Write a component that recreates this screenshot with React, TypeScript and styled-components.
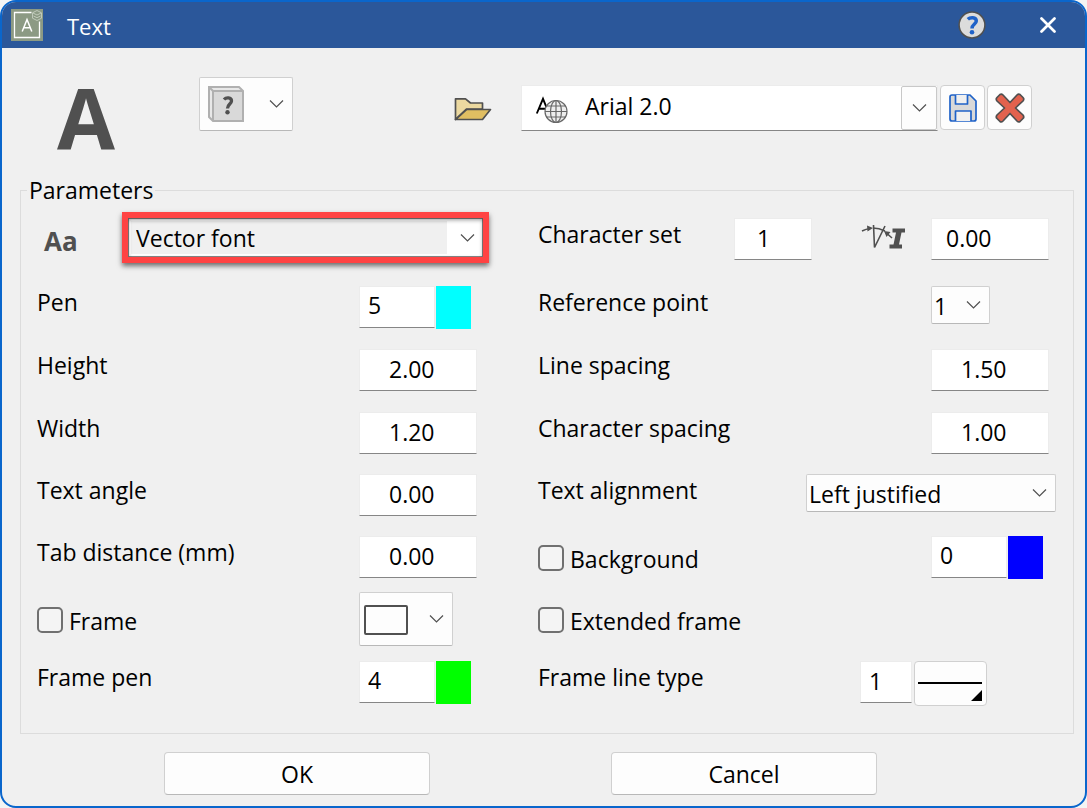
import React from "react";
import styled, { createGlobalStyle } from "styled-components";

const GlobalStyle = createGlobalStyle`
  *, *::before, *::after { box-sizing: border-box; }
  body { margin: 0; background: #f4f4f4; }
  body, button, input, select {
    font-family: "Open Sans", "Noto Sans", sans-serif;
    font-size: 23px;
    color: #000;
  }
`;

const Dialog = styled.main`
  display: flex;
  flex-direction: column;
  min-height: 100vh;
  border: 2px solid #0a66cc;
  border-radius: 16px;
  background: #f0f0f0;
  overflow: hidden;
`;

const TitleBar = styled.header`
  display: flex;
  align-items: center;
  height: 46px;
  padding: 0 23px 0 9px;
  background: #2b579a;
`;

const Title = styled.h1`
  flex: 1;
  margin: 2px 0 0 24px;
  font-size: 22px;
  font-weight: 400;
  line-height: 34px;
  color: #fff;
`;

const TitleButton = styled.button`
  display: grid;
  place-items: center;
  width: 28px;
  height: 28px;
  margin: 0 0 0 48px;
  padding: 0;
  border: 0;
  background: none;
`;

const Header = styled.section`
  display: grid;
  grid-template-columns: 142px 255px 67px minmax(0, 1fr) 94px;
  align-items: start;
  height: 125px;
  padding: 29px 53px 0 55px;
`;

const BigLetter = styled.div`
  height: 84px;
  font-size: 84px;
  font-weight: 700;
  line-height: 80px;
  color: #505050;
`;

const PickButton = styled.button`
  display: flex;
  align-items: center;
  justify-content: space-between;
  width: 94px;
  height: 54px;
  padding: 0 8px 0 4px;
  border: 1px solid #d0d0d0;
  border-bottom-color: #b8b8b8;
  border-radius: 2px;
  background: #fdfdfd;
`;

const FolderButton = styled.button`
  height: 26px;
  margin-top: 19px;
  padding: 0;
  border: 0;
  background: none;
  text-align: left;
`;

const FontField = styled.div`
  display: flex;
  align-items: stretch;
  height: 46px;
  margin: 8px 0 0;
  padding-left: 13px;
  border: 1px solid #ececec;
  border-bottom: 1px solid #868686;
  background: #fff;
`;

const FontInput = styled.input`
  flex: 1;
  min-width: 0;
  padding: 0 0 5px 16px;
  border: 0;
  background: none;
  outline: 0;
`;

const FontDrop = styled.button`
  display: grid;
  place-items: center;
  width: 36px;
  padding: 0;
  border: 1px solid #c8c8c8;
  border-radius: 2px;
  background: #fdfdfd;
`;

const Tools = styled.div`
  display: flex;
  gap: 2px;
  margin-top: 8px;
  padding-left: 2px;
`;

const ToolButton = styled.button`
  display: grid;
  place-items: center;
  flex: 0 0 45px;
  height: 45px;
  padding: 0;
  border: 1px solid #d0d0d0;
  border-radius: 4px;
  background: #fdfdfd;
`;

const Group = styled.fieldset`
  min-width: 0;
  margin: 0 11px 0 18px;
  padding: 11px 17px 10px 16px;
  border: 1px solid #dcdcdc;
`;

const Legend = styled.legend`
  margin-left: -10px;
  padding: 0 2px;
  line-height: 34px;
`;

const Rows = styled.div`
  display: grid;
  grid-template-columns: minmax(0, 322fr) minmax(0, 179fr) minmax(0, 393fr) minmax(0, 125fr);
  grid-template-rows: 68px 63px 63px 62px 62px 62px 63px 62px;
  align-items: start;
`;

const Label = styled.label`
  line-height: 32px;
`;

const Cell = styled.div<{ $wide?: boolean; $right?: number }>`
  display: flex;
  align-items: flex-start;
  grid-column: ${(p) => (p.$wide ? "span 2" : "auto")};
  padding-right: ${(p) => p.$right ?? 0}px;
`;

const Lead = styled(Label)`
  flex: 1;
`;

const Field = styled.input<{ $w: number; $pad: number; $lift?: boolean }>`
  width: ${(p) => p.$w}px;
  height: 42px;
  padding: 0 0 ${(p) => (p.$lift ? 4 : 2)}px ${(p) => p.$pad}px;
  border: 1px solid #ececec;
  border-bottom: 1px solid #868686;
  border-radius: 0;
  background: #fff;
  outline: 0;
`;

const Swatch = styled.button<{ $color: string }>`
  width: 35px;
  height: 43px;
  margin-left: 1px;
  padding: 0;
  border: 0;
  background: ${(p) => p.$color};
`;

const SelectWrap = styled.div<{ $w: number }>`
  display: grid;
  align-items: center;
  width: ${(p) => p.$w}px;
  height: 38px;
  border: 1px solid #d0d0d0;
  border-bottom-color: #b8b8b8;
  border-radius: 2px;
  background: #fdfdfd;

  > * {
    grid-area: 1 / 1;
  }
  > svg {
    justify-self: end;
    margin-right: 8px;
    pointer-events: none;
  }
`;

const Select = styled.select`
  width: 100%;
  height: 36px;
  padding: 1px 0 0 2px;
  border: 0;
  background: none;
  appearance: none;
  outline: 0;
`;

const FontTypeIcon = styled.span`
  width: 85px;
  padding-left: 7px;
  font-size: 26px;
  font-weight: 700;
  line-height: 46px;
  color: #505050;
`;

const Highlight = styled(SelectWrap)`
  flex: 1;
  width: auto;
  height: 51px;
  margin: -6px 49px 0 0;
  border: 6px solid #ff4343;
  border-radius: 0;
  background: linear-gradient(to left, #fff 36px, #f0f0f0 36px);
  box-shadow: 0 3px 5px rgba(0, 0, 0, 0.55), inset 0 2px 4px rgba(0, 0, 0, 0.4),
    inset 0 0 0 1px #888, inset 0 0 0 3px #fff;

  > select {
    padding: 0 0 0 8px;
  }
`;

const TickLabel = styled.label`
  display: flex;
  align-items: flex-start;
  gap: 6px;
  margin-top: 6px;
  line-height: 34px;
`;

const Tick = styled.input`
  appearance: none;
  width: 26px;
  height: 26px;
  margin: 3px 0 0;
  border: 2px solid #707070;
  border-radius: 5px;
  background: #f4f4f4;
`;

const FramePick = styled(PickButton)`
  margin-top: -6px;
`;

const SlantIconBox = styled.span`
  margin: 7px 26px 0 49px;
  height: 32px;
`;

const LineButton = styled(ToolButton)`
  flex: 0 0 73px;
  margin-left: 2px;
`;

const Footer = styled.footer`
  display: flex;
  justify-content: center;
  gap: 181px;
  padding: 18px 46px 11px 0;
`;

const ActionButton = styled.button`
  flex: 0 1 266px;
  height: 43px;
  padding: 0;
  border: 1px solid #d0d0d0;
  border-bottom-color: #b8b8b8;
  border-radius: 4px;
  background: #fdfdfd;
`;

const Chevron = () => (
  <svg width="15" height="10" viewBox="0 0 15 10" fill="none" stroke="#505050" strokeWidth="1.2" aria-hidden="true">
    <path d="M1 1.5 7.5 8 14 1.5" />
  </svg>
);

const AppIcon = () => (
  <svg width="32" height="32" viewBox="0 0 32 32" fill="none" aria-hidden="true">
    <path d="M0 0H32V32H0Z" fill="#8c9a84" />
    <path d="M20.500 3.500H3.500V28.500H28.500V12.500" stroke="#fff" strokeWidth="1.300" />
    <path d="M11.200 22.500 16 10.500 20.800 22.500M12.800 18.700H19.200" stroke="#fff" strokeWidth="1.500" />
    <path d="M26 1.500 30.500 3.800V9.200L26 11.500 21.500 9.200V3.800ZM22 4 26 6 30 4M22.500 7 26 8.700 29.500 7" stroke="#cdd5c8" strokeWidth=".8" />
  </svg>
);

const HelpIcon = () => (
  <svg width="28" height="28" viewBox="0 0 28 28" fill="none" aria-hidden="true">
    <circle cx="14" cy="14" r="12.900" fill="#dcdcdc" stroke="#505050" strokeWidth="1.500" />
    <path d="M9.800 8.300C12 6.300 18.300 5.800 18.300 10 18.300 13 14 13.200 14 17.500" stroke="#1f62c8" strokeWidth="3.500" />
    <circle cx="14" cy="21.300" r="2.300" fill="#1f62c8" />
  </svg>
);

const CloseIcon = () => (
  <svg width="16" height="16" viewBox="0 0 16 16" fill="none" stroke="#fff" strokeWidth="2.700" strokeLinecap="round" aria-hidden="true">
    <path d="M1.500 1.500 14.500 14.500M14.500 1.500 1.500 14.500" />
  </svg>
);

const BlockIcon = () => (
  <svg width="44" height="38" viewBox="0 0 44 38" fill="none" aria-hidden="true">
    <path d="M5 2H35L39 6V36H9L5 32Z" fill="#e8e8e8" />
    <path d="M9 6H39V36H9Z" fill="#d9d9d9" />
    <path d="M5 2H35L39 6V36H9L5 32ZM5 2 9 6V36M9 6H39" stroke="#b0b0b0" strokeWidth="2" />
    <path d="M20 14.500C22 12.300 27.500 12 27.500 16 27.500 19 23.500 19.300 23.500 23.500" stroke="#505050" strokeWidth="3.300" />
    <circle cx="23.500" cy="27.200" r="2.200" fill="#505050" />
  </svg>
);

const FolderIcon = () => (
  <svg width="38" height="24" viewBox="0 0 38 24" fill="none" stroke="#505050" strokeWidth="1.700" strokeLinejoin="round" aria-hidden="true">
    <path d="M1.500 22.500V1.800H11.500L16.500 6H28.500V12H12.500Z" fill="#ecd9a0" />
    <path d="M1.500 22.500 12.500 12.500H36.500L28.500 22.500Z" fill="#e0be62" />
  </svg>
);

const GlobeLetterIcon = () => (
  <svg width="34" height="44" viewBox="0 0 34 44" fill="none" aria-hidden="true">
    <path d="M1.800 27.500 8 12.800 14 27.500M4 22.800H12" stroke="#000" strokeWidth="1.900" />
    <circle cx="21" cy="25.500" r="11" fill="#eee" />
    <g stroke="#686868" strokeWidth="1.200">
      <circle cx="21" cy="25.500" r="11" />
      <ellipse cx="21" cy="25.500" rx="5.500" ry="11" />
      <path d="M21 14.500V36.500M10 25.500H32M11.700 20H30.300M11.700 31H30.300" />
    </g>
  </svg>
);

const SaveIcon = () => (
  <svg width="28" height="28" viewBox="0 0 28 28" fill="none" stroke="#1f62c8" strokeWidth="1.700" strokeLinejoin="round" aria-hidden="true">
    <path d="M3 1H21L27 7V25Q27 27 25 27H3Q1 27 1 25V3Q1 1 3 1Z" fill="#d9d9d9" />
    <path d="M6.500 1V10H18.500V1M6.500 27V17H22V27" fill="#f0f0f0" />
  </svg>
);

const DeleteIcon = () => (
  <svg width="30" height="30" viewBox="0 0 30 30" fill="#e2624e" stroke="#505050" strokeWidth="1.700" strokeLinejoin="round" aria-hidden="true">
    <path d="M5 1.500Q6.500 .5 8 2L15 9.500 22 2Q23.500 .5 25 1.500L28 4.500Q29.500 6 28 8L20.500 15 28 22Q29.500 24 28 25.500L25 28.500Q23.500 29.500 22 28L15 20.500 8 28Q6.500 29.500 5 28.500L2 25.500Q.5 24 2 22L9.500 15 2 8Q.5 6 2 4.500Z" />
  </svg>
);

const SlantIcon = () => (
  <svg width="44" height="28" viewBox="0 0 44 28" fill="none" stroke="#505050" strokeWidth="1.600" aria-hidden="true">
    <path d="M1 6Q5 4 9 3.500M12 3Q18 3 24 6" />
    <path d="M12.500 0 13.500 22.500 24 1M31 13 26 8.500" />
    <path d="M6 .5 12 3 6.500 6.500ZM23 6 29.500 7 25.500 12Z" fill="#505050" stroke="none" />
    <path d="M31.500 3.500H44V7.500H40.500L38 19.500H41V23.500H28.500V19.500H32.500L35 7.500H31.500Z" fill="#505050" stroke="none" />
  </svg>
);

const FrameIcon = () => (
  <svg width="46" height="32" viewBox="0 0 46 32" fill="none" aria-hidden="true">
    <rect x="1" y="3" width="42" height="28" rx="1" stroke="#505050" strokeWidth="2" />
  </svg>
);

const LineTypeIcon = () => (
  <svg width="66" height="40" viewBox="0 0 66 40" aria-hidden="true">
    <path d="M0 18H64V20H0ZM64 26V37H53Z" fill="#000" />
  </svg>
);

export default function App() {
  return (
    <>
      <GlobalStyle />
      <Dialog aria-label="Text">
        <TitleBar>
          <AppIcon />
          <Title>Text</Title>
          <TitleButton aria-label="Help"><HelpIcon /></TitleButton>
          <TitleButton aria-label="Close"><CloseIcon /></TitleButton>
        </TitleBar>

        <Header>
          <BigLetter>A</BigLetter>
          <PickButton aria-label="Text style"><BlockIcon /><Chevron /></PickButton>
          <FolderButton aria-label="Open"><FolderIcon /></FolderButton>
          <FontField>
            <GlobeLetterIcon />
            <FontInput aria-label="Font" defaultValue="Arial 2.0" />
            <FontDrop aria-label="Choose font"><Chevron /></FontDrop>
          </FontField>
          <Tools>
            <ToolButton aria-label="Save"><SaveIcon /></ToolButton>
            <ToolButton aria-label="Delete"><DeleteIcon /></ToolButton>
          </Tools>
        </Header>

        <Group>
          <Legend>Parameters</Legend>
          <Rows>
            <Cell $wide>
              <FontTypeIcon aria-hidden="true">Aa</FontTypeIcon>
              <Highlight $w={367}>
                <Select aria-label="Font type"><option>Vector font</option></Select>
                <Chevron />
              </Highlight>
            </Cell>
            <Cell>
              <Lead htmlFor="charset">Character set</Lead>
              <Field id="charset" $w={78} $pad={22} defaultValue="1" />
              <SlantIconBox><SlantIcon /></SlantIconBox>
            </Cell>
            <Cell><Field aria-label="Slant angle" $w={118} $pad={14} defaultValue="0.00" /></Cell>

            <Label htmlFor="pen">Pen</Label>
            <Cell>
              <Field id="pen" $w={76} $pad={8} $lift defaultValue="5" />
              <Swatch aria-label="Pen colour" $color="#00ffff" />
            </Cell>
            <Label htmlFor="refpoint">Reference point</Label>
            <SelectWrap $w={59}>
              <Select id="refpoint"><option>1</option></Select>
              <Chevron />
            </SelectWrap>

            <Label htmlFor="height">Height</Label>
            <Cell><Field id="height" $w={118} $pad={29} defaultValue="2.00" /></Cell>
            <Label htmlFor="linespacing">Line spacing</Label>
            <Cell><Field id="linespacing" $w={118} $pad={29} defaultValue="1.50" /></Cell>

            <Label htmlFor="width">Width</Label>
            <Cell><Field id="width" $w={118} $pad={29} defaultValue="1.20" /></Cell>
            <Label htmlFor="charspacing">Character spacing</Label>
            <Cell><Field id="charspacing" $w={118} $pad={29} defaultValue="1.00" /></Cell>

            <Label htmlFor="angle">Text angle</Label>
            <Cell><Field id="angle" $w={118} $pad={29} defaultValue="0.00" /></Cell>
            <Cell $wide>
              <Lead htmlFor="alignment">Text alignment</Lead>
              <SelectWrap $w={250}>
                <Select id="alignment"><option>Left justified</option></Select>
                <Chevron />
              </SelectWrap>
            </Cell>

            <Label htmlFor="tab">Tab distance (mm)</Label>
            <Cell><Field id="tab" $w={118} $pad={29} defaultValue="0.00" /></Cell>
            <TickLabel><Tick type="checkbox" />Background</TickLabel>
            <Cell>
              <Field aria-label="Background pen" $w={76} $pad={8} $lift defaultValue="0" />
              <Swatch aria-label="Background colour" $color="#0000ff" />
            </Cell>

            <TickLabel><Tick type="checkbox" />Frame</TickLabel>
            <FramePick aria-label="Frame shape"><FrameIcon /><Chevron /></FramePick>
            <Cell $wide>
              <TickLabel><Tick type="checkbox" />Extended frame</TickLabel>
            </Cell>

            <Label htmlFor="framepen">Frame pen</Label>
            <Cell>
              <Field id="framepen" $w={76} $pad={8} $lift defaultValue="4" />
              <Swatch aria-label="Frame pen colour" $color="#00ff00" />
            </Cell>
            <Cell $wide $right={69}>
              <Lead htmlFor="linetype">Frame line type</Lead>
              <Field id="linetype" $w={52} $pad={8} defaultValue="1" />
              <LineButton aria-label="Choose line type"><LineTypeIcon /></LineButton>
            </Cell>
          </Rows>
        </Group>

        <Footer>
          <ActionButton>OK</ActionButton>
          <ActionButton>Cancel</ActionButton>
        </Footer>
      </Dialog>
    </>
  );
}
